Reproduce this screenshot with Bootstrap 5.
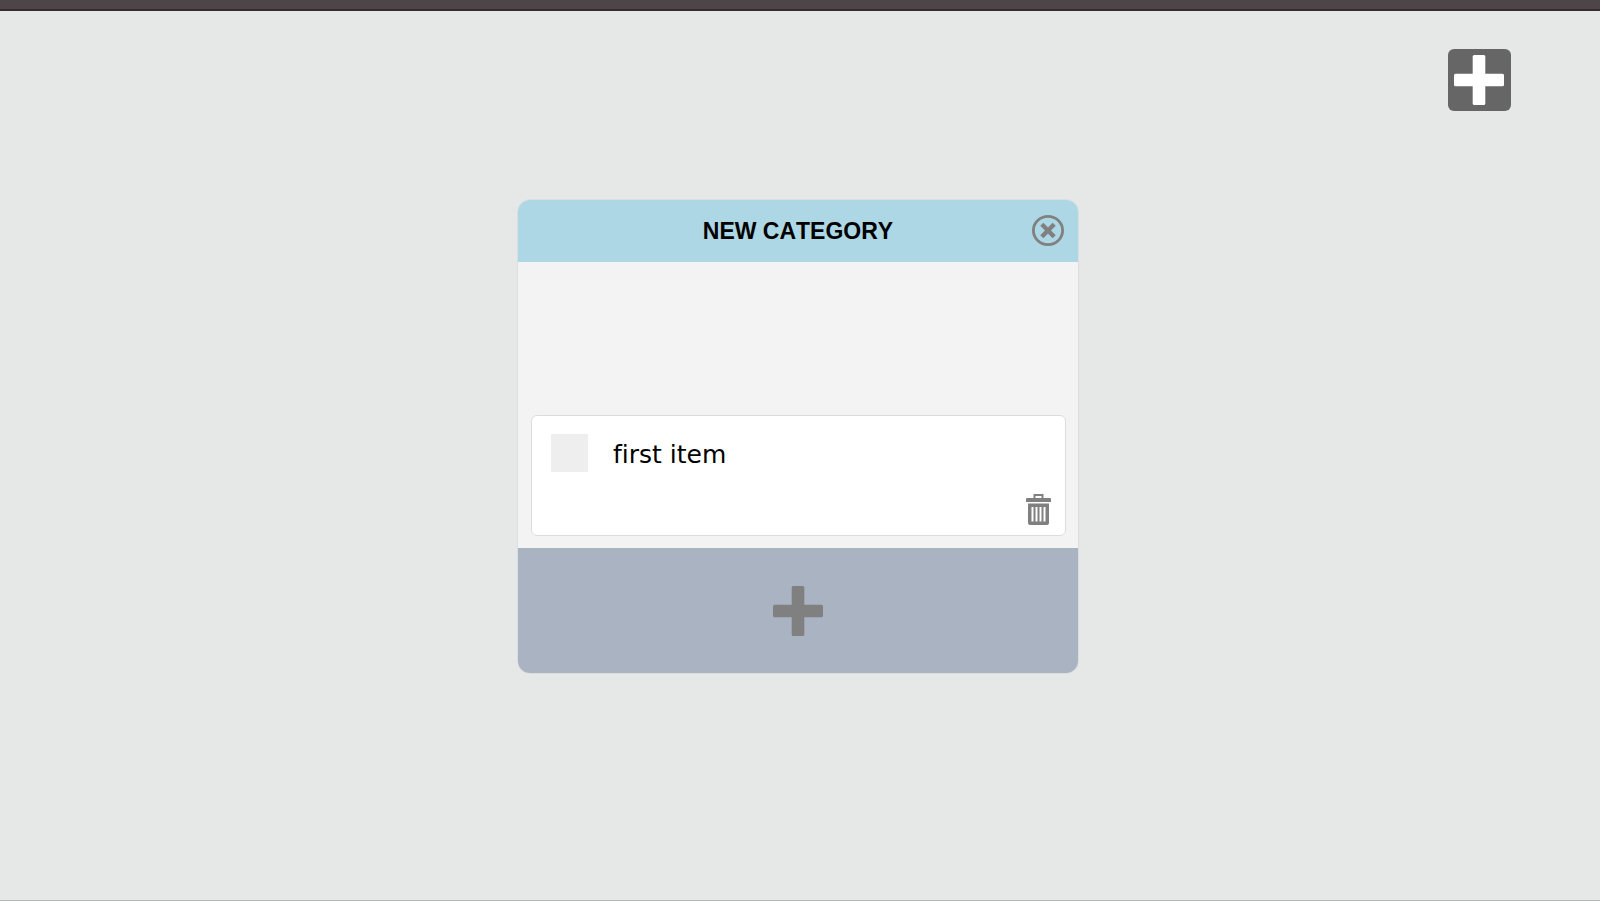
<!DOCTYPE html>
<html lang="en">
<head>
<meta charset="utf-8">
<meta name="viewport" content="width=device-width, initial-scale=1">
<title>Categories</title>
<link href="https://cdn.jsdelivr.net/npm/bootstrap@5.3.0/dist/css/bootstrap.min.css" rel="stylesheet">
<style>
body { background: #e5e8e6; font-family: "Liberation Sans", Arial, sans-serif; color: #000; }
.page { border-bottom: 1px solid #b5b8b6; }
.top-strip { height: 11px; background: #4d4547; border-bottom: 2px solid #372d2f; }
.toolbar { padding: 38px 89px 0; }
.add-category { width: 63px; height: 62px; padding: 6px 7px 6px 6px; background: #666; border-radius: 6px; color: #fff; }
.board { padding: 88px 4px 32px 0; }
.category { width: 562px; max-width: 100%; background: #f3f3f3; border: 1px solid #dcdedd; border-radius: 13px; }
.category-head { height: 62px; background: #add7e4; }
.category-title { font-size: 23px; line-height: 32px; font-kerning: none; }
.icon-btn { color: #808080; line-height: 1; }
.close-btn { right: 14px; }
.category-body { min-height: 286px; padding: 12px 12px 12px 13px; }
.item { height: 121px; border: 1px solid #dcdcdc; border-radius: 6px; padding: 18px 14px 10px 19px; }
.item-row { gap: 25px; }
.item-check { width: 37px; height: 38px; background: #eee; }
.item-text { font-family: "DejaVu Sans", Verdana, sans-serif; font-size: 25px; line-height: 42px; font-variant-ligatures: none; }
.add-item { height: 125px; background: #aab3c2; color: #808080; }
</style>
</head>
<body>
<div class="page min-vh-100">
  <div class="top-strip"></div>
  <header class="toolbar d-flex justify-content-end">
    <button type="button" class="add-category border-0 d-flex align-items-center justify-content-center" aria-label="Add category">
      <svg width="50" height="50" viewBox="0 0 50 50" fill="currentColor" aria-hidden="true"><rect x="18.700" width="12.600" height="50" rx="1.500"/><rect y="18.700" width="50" height="12.600" rx="1.500"/></svg>
    </button>
  </header>
  <main class="board d-flex justify-content-center">
    <section class="category overflow-hidden">
      <div class="category-head position-relative d-flex align-items-center justify-content-center">
        <h1 class="category-title fw-bold m-0">NEW CATEGORY</h1>
        <button type="button" class="icon-btn close-btn position-absolute bg-transparent border-0 p-0" aria-label="Delete category">
          <svg class="d-block" width="32" height="32" viewBox="0 0 32 32" fill="none" stroke="currentColor" aria-hidden="true"><ellipse cx="16" cy="15.500" rx="14.600" ry="14.100" stroke-width="2.800"/><path d="M9.800 9.300 22.200 21.700M22.200 9.300 9.800 21.700" stroke-width="4.400"/></svg>
        </button>
      </div>
      <div class="category-body d-flex flex-column justify-content-end">
        <div class="item bg-white d-flex flex-column justify-content-between">
          <div class="item-row d-flex align-items-start">
            <input class="item-check border-0 rounded-0 m-0 form-check-input" type="checkbox" id="item1">
            <label class="item-text" for="item1">first item</label>
          </div>
          <button type="button" class="icon-btn align-self-end bg-transparent border-0 p-0" aria-label="Delete item">
            <svg class="d-block" width="25" height="31" viewBox="0 0 25 31" aria-hidden="true"><path d="M8.500 4V1h8v3" fill="none" stroke="currentColor" stroke-width="2"/><path d="M1 4h23q1 0 1 1v3H0V5q0-1 1-1ZM2 9.500h21V29q0 2-2 2H4q-2 0-2-2Z" fill="currentColor"/><path d="M6.500 13v14.500M10.500 13v14.500M14.500 13v14.500M18.500 13v14.500" stroke="#fff" stroke-width="2"/></svg>
          </button>
        </div>
      </div>
      <button type="button" class="add-item w-100 border-0 p-0 d-flex align-items-center justify-content-center" aria-label="Add item">
        <svg width="50" height="50" viewBox="0 0 50 50" fill="currentColor" aria-hidden="true"><rect x="18.700" width="12.600" height="50" rx="1.500"/><rect y="18.700" width="50" height="12.600" rx="1.500"/></svg>
      </button>
    </section>
  </main>
</div>
<script src="https://cdn.jsdelivr.net/npm/bootstrap@5.3.0/dist/js/bootstrap.bundle.min.js"></script>
</body>
</html>
